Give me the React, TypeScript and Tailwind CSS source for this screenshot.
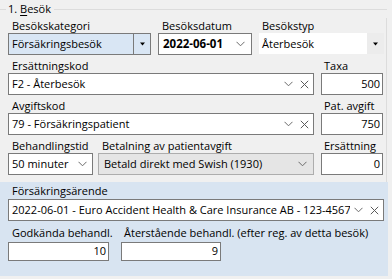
import React from 'react';

function Chevron() {
  return (
    <svg width="9" height="6" viewBox="0 0 9 6" className="shrink-0">
      <path d="M0.5 0.8 L4.5 4.8 L8.5 0.8" stroke="#6b6b6b" strokeWidth="1" fill="none" />
    </svg>
  );
}

function Cross() {
  return (
    <svg width="9" height="9" viewBox="0 0 9 9" className="shrink-0">
      <path d="M0.8 0.8 L8.2 8.2 M8.2 0.8 L0.8 8.2" stroke="#5a5a5a" strokeWidth="1" fill="none" />
    </svg>
  );
}

function Triangle() {
  return (
    <svg width="7" height="4" viewBox="0 0 7 4">
      <polygon points="1,0.5 6,0.5 3.5,3.5" fill="#000" />
    </svg>
  );
}

function Label({ children, className = '' }: { children: React.ReactNode; className?: string }) {
  return <div className={`h-[14px] leading-[14px] pl-1 whitespace-nowrap ${className}`}>{children}</div>;
}

function NumBox({ value, className = 'h-[22px]' }: { value: string; className?: string }) {
  return (
    <div className={`${className} border border-[#7a7a7a] bg-white flex items-center justify-end pr-[2px]`}>
      {value}
    </div>
  );
}

function Lookup({ text }: { text: string }) {
  return (
    <div className="h-[22px] border border-[#7a7a7a] bg-white flex items-center pl-[3px] pr-[4px]">
      <span className="flex-1 overflow-hidden whitespace-nowrap">{text}</span>
      <div className="flex items-center gap-[7px] pl-1">
        <Chevron />
        <Cross />
      </div>
    </div>
  );
}

export default function App() {
  return (
    <div className="w-[392px] h-[279px] bg-[#f0f0f0] overflow-hidden font-['Open_Sans','Noto_Sans',sans-serif] text-[11px] text-black">
      {/* group box header */}
      <div className="flex items-center h-[18px] w-[387px]">
        <div className="w-[6px] h-px bg-[#dcdcdc]" />
        <span className="ml-[2px] mr-[3px] leading-[18px]">
          1. <span className="underline underline-offset-2">B</span>esök
        </span>
        <div className="flex-1 h-px bg-[#dcdcdc]" />
      </div>

      <div className="w-[387px] border-r border-[#dcdcdc] pl-2 pt-px pb-[7px] flex flex-col gap-1">
        {/* row 1 */}
        <div className="flex">
          <div className="w-[143px]">
            <Label>Besökskategori</Label>
            <div className="h-[22px] border border-[#7a7a7a] bg-[#d9e6f4] flex">
              <span className="flex-1 pl-[3px] leading-[20px]">Försäkringsbesök</span>
              <div className="w-[17px] border-l border-[#7a7a7a] flex items-center justify-center">
                <Triangle />
              </div>
            </div>
          </div>
          <div className="w-[94px] ml-[7px]">
            <Label>Besöksdatum</Label>
            <div className="h-[22px] border border-[#7a7a7a] bg-white flex items-center pl-[4px] pr-[6px]">
              <span className="flex-1 font-bold text-[11.5px]">2022-06-01</span>
              <Chevron />
            </div>
          </div>
          <div className="w-[125px] ml-[7px]">
            <Label className="pl-[3px]">Besökstyp</Label>
            <div className="h-[21px] bg-white flex">
              <span className="flex-1 pl-[3px] leading-[21px]">Återbesök</span>
              <div className="w-[17px] bg-[#ececec] flex items-center justify-center">
                <Triangle />
              </div>
            </div>
          </div>
        </div>

        {/* row 2 */}
        <div className="flex">
          <div className="w-[306px]">
            <Label>Ersättningskod</Label>
            <Lookup text="F2 - Återbesök" />
          </div>
          <div className="w-[62px] ml-[7px]">
            <Label className="pl-[3px]">Taxa</Label>
            <NumBox value="500" />
          </div>
        </div>

        {/* row 3 */}
        <div className="flex">
          <div className="w-[306px]">
            <Label>Avgiftskod</Label>
            <Lookup text="79 - Försäkringspatient" />
          </div>
          <div className="w-[62px] ml-[7px]">
            <Label className="pl-[3px]">Pat. avgift</Label>
            <NumBox value="750" />
          </div>
        </div>

        {/* row 4 */}
        <div className="flex">
          <div className="w-[85px]">
            <Label>Behandlingstid</Label>
            <div className="h-[22px] border border-[#7a7a7a] bg-white flex items-center pl-[3px] pr-[5px]">
              <span className="flex-1">50 minuter</span>
              <Chevron />
            </div>
          </div>
          <div className="w-[216px] ml-[5px]">
            <Label>Betalning av patientavgift</Label>
            <div className="h-[22px] border border-[#adadad] bg-[#e5e5e5] flex items-center pl-[5px] pr-[6px]">
              <span className="flex-1 whitespace-nowrap">Betald direkt med Swish (1930)</span>
              <Chevron />
            </div>
          </div>
          <div className="w-[62px] ml-[7px]">
            <Label className="pl-[3px]">Ersättning</Label>
            <NumBox value="0" />
          </div>
        </div>
      </div>

      {/* insurance case */}
      <div className="w-[388px] h-[94px] bg-[#d8e4f1] pl-2 pt-[2px]">
        <div className="w-[376px]">
          <Label className="pl-0">Försäkringsärende</Label>
          <div className="mt-px">
            <Lookup text="2022-06-01 - Euro Accident Health & Care Insurance AB - 123-45678" />
          </div>
        </div>
        <div className="flex mt-[5px]">
          <div className="w-[101px]">
            <Label>Godkända behandl.</Label>
            <NumBox value="10" className="h-[19px] mt-[2px]" />
          </div>
          <div className="w-[100px] ml-[12px]">
            <Label className="pl-[3px]">Återstående behandl. (efter reg. av detta besök)</Label>
            <NumBox value="9" className="h-[19px] mt-[2px]" />
          </div>
        </div>
      </div>
    </div>
  );
}
